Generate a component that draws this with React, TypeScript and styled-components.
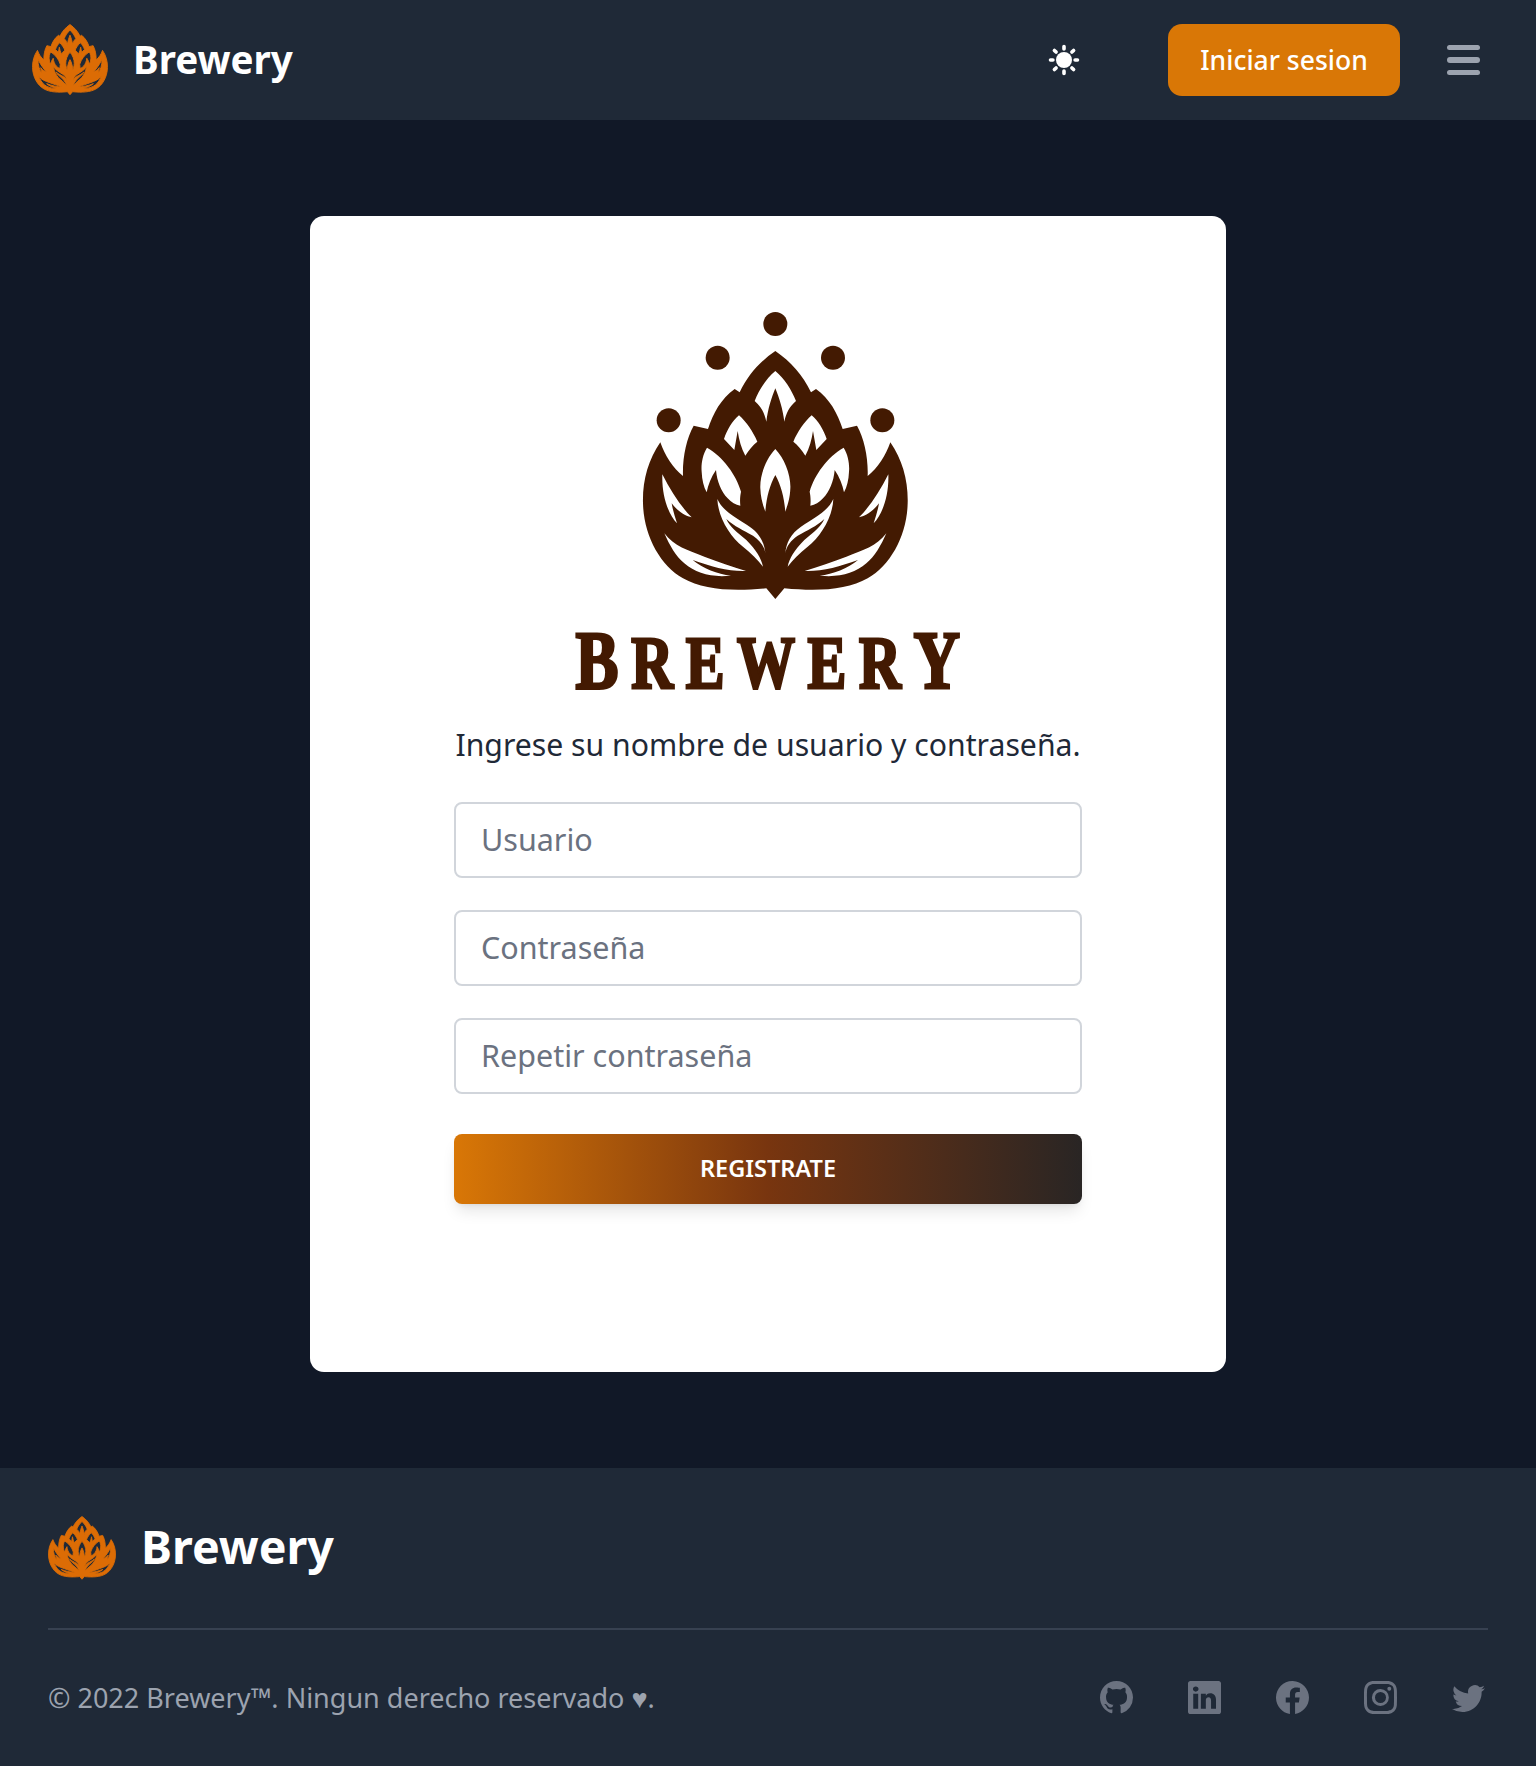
import React from "react";
import styled, { createGlobalStyle } from "styled-components";
import { BsFacebook, BsGithub, BsInstagram, BsLinkedin, BsTwitter } from "react-icons/bs";

const HOP_PATH = `
M463 168 C510 200 545 240 570 292 L585 282 C625 310 650 355 665 402 L708 392 C730 430 742 490 740 543
C770 520 795 480 808 442 C845 495 862 560 860 625 C858 720 810 810 740 850 C680 885 590 890 490 880
L463 912 L436 880 C336 890 246 885 186 850 C116 810 68 720 66 625 C64 560 81 495 118 442
C131 480 156 520 186 543 C184 490 196 430 218 392 L261 402 C276 355 301 310 341 282 L356 292 C381 240 416 200 463 168 Z
M463 228 C490 250 512 285 525 318 C505 335 495 355 490 380 C485 340 475 310 463 280 C451 310 441 340 436 380 C431 355 421 335 401 318 C414 285 436 250 463 228 Z
M572 361 C592 378 608 405 617 432 L586 465 L576 408 C572 435 565 460 553 482 C543 465 530 450 517 440 C530 410 550 380 572 361 Z
M354 361 C334 378 318 405 309 432 L340 465 L350 408 C354 435 361 460 373 482 C383 465 396 450 409 440 C396 410 376 380 354 361 Z
M463 462 C490 490 510 540 508 580 C507 610 500 630 493 650 C490 610 480 570 463 540 C446 570 436 610 433 650 C426 630 419 610 418 580 C416 540 436 490 463 462 Z
M668 458 C682 480 686 510 684 530 C683 555 678 575 669 592 C665 570 655 545 641 525 C638 560 625 590 606 610 C595 622 582 630 568 632 C570 615 568 600 566 590 C580 540 620 485 668 458 Z
M258 458 C244 480 240 510 242 530 C243 555 248 575 257 592 C261 570 271 545 285 525 C288 560 301 590 320 610 C331 622 344 630 358 632 C356 615 358 600 360 590 C346 540 306 485 258 458 Z
M637 612 C635 665 600 725 560 755 C535 775 515 795 500 815 C505 790 520 765 550 735 C580 710 600 695 610 672 C585 695 560 705 530 722 C510 735 495 755 493 775 C495 745 510 715 540 695 C580 668 620 650 637 612 Z
M289 612 C291 665 326 725 366 755 C391 775 411 795 426 815 C421 790 406 765 376 735 C346 710 326 695 316 672 C341 695 366 705 396 722 C416 735 431 755 433 775 C431 745 416 715 386 695 C346 668 306 650 289 612 Z
M124 538 C150 590 180 635 212 667 C195 662 175 655 152 625 C155 645 162 665 168 685 C140 655 122 600 124 538 Z
M802 538 C776 590 746 635 714 667 C731 662 751 655 774 625 C771 645 764 665 758 685 C786 655 804 600 802 538 Z
M130 715 C160 755 200 765 250 785 C290 800 335 815 375 828 C325 830 270 815 215 795 C245 820 290 838 330 842 C270 848 225 835 190 805 C165 785 145 750 130 715 Z
M796 715 C766 755 726 765 676 785 C636 800 591 815 551 828 C601 830 656 815 711 795 C681 820 636 838 596 842 C656 848 701 835 736 805 C761 785 781 750 796 715 Z
`;

const GlobalStyle = createGlobalStyle`
  * {
    box-sizing: border-box;
  }

  body {
    margin: 0;
    background-color: #111827;
    font-family: "Noto Sans", "Open Sans", sans-serif;
  }
`;

const Navbar = styled.nav`
  display: flex;
  align-items: center;
  height: 120px;
  padding: 0 32px;
  background-color: #1f2937;
`;

const Brand = styled.a<{ $gap: number }>`
  display: flex;
  align-items: center;
  gap: ${(p) => p.$gap}px;
  color: #fff;
`;

const BrandName = styled.span<{ $size: number; $lift: number }>`
  padding-bottom: ${(p) => p.$lift}px;
  font-size: ${(p) => p.$size}px;
  font-weight: 700;
  line-height: 1;
`;

const NavActions = styled.div`
  display: flex;
  align-items: center;
  margin-left: auto;
`;

const ThemeToggle = styled.button`
  display: flex;
  padding: 0;
  margin-right: 88px;
  border: 0;
  background: none;
  color: #fff;
`;

const LoginButton = styled.button`
  width: 232px;
  height: 72px;
  padding: 0;
  border: 0;
  border-radius: 14px;
  background-color: #d97706;
  color: #fff;
  font-family: inherit;
  font-size: 26.5px;
  font-weight: 500;
`;

const MenuButton = styled.button`
  display: flex;
  flex-direction: column;
  gap: 7px;
  width: 33px;
  padding: 0;
  margin-left: 47px;
  margin-right: 24px;
  border: 0;
  background: none;

  span {
    display: block;
    height: 5.5px;
    border-radius: 3px;
    background-color: #9ca3af;
  }
`;

const Main = styled.main`
  padding: 96px 0;
`;

const Card = styled.section`
  display: flex;
  flex-direction: column;
  align-items: center;
  width: 916px;
  height: 1156px;
  margin: 0 auto;
  padding-top: 79px;
  border-radius: 14px;
  background-color: #fff;
`;

const LogoMark = styled.svg`
  display: block;
  width: 300px;
  height: 320px;
  margin-left: 5px;
  fill: #431a02;
`;

const Wordmark = styled.div`
  margin-top: 8px;
  color: #431a02;
  font-family: "Liberation Serif", serif;
  font-size: 74px;
  font-weight: 700;
  line-height: 76px;
  letter-spacing: 16px;
  white-space: nowrap;
  -webkit-text-stroke: 3px #431a02;
  transform: scaleX(0.785);
`;

const Initial = styled.span`
  font-size: 82px;

  &:last-child {
    letter-spacing: 0;
  }
`;

const Intro = styled.p`
  margin: 24px 0 0;
  color: #1f2937;
  font-size: 30.2px;
  line-height: 40px;
  white-space: nowrap;
`;

const Form = styled.form`
  display: flex;
  flex-direction: column;
  gap: 32px;
  width: 628px;
  margin-top: 37px;
`;

const Field = styled.input`
  width: 100%;
  height: 76px;
  padding: 0 25px 3px;
  border: 2px solid #d1d5db;
  border-radius: 8px;
  background-color: #fff;
  font-family: inherit;
  font-size: 30.5px;

  &::placeholder {
    color: #6b7280;
    opacity: 1;
  }
`;

const SubmitButton = styled.button`
  height: 70px;
  margin-top: 8px;
  padding: 0 0 3px;
  border: 0;
  border-radius: 8px;
  background-image: linear-gradient(to right, #d97706, #78350f, #292524);
  box-shadow: 0 10px 15px -3px rgba(0, 0, 0, 0.1), 0 4px 6px -4px rgba(0, 0, 0, 0.1);
  color: #fff;
  font-family: inherit;
  font-size: 23.5px;
  font-weight: 600;
  text-transform: uppercase;
`;

const Footer = styled.footer`
  height: 298px;
  padding: 48px 48px 0;
  background-color: #1f2937;
`;

const Divider = styled.hr`
  height: 2px;
  margin: 48px 0 0;
  border: 0;
  background-color: #374151;
`;

const FooterBottom = styled.div`
  display: flex;
  align-items: center;
  justify-content: space-between;
  margin-top: 49px;
`;

const Copyright = styled.span`
  color: #9ca3af;
  font-size: 27px;
`;

const Socials = styled.div`
  display: flex;
  gap: 55px;
  margin-right: 3px;
  color: #6b7280;
  font-size: 33px;

  a {
    display: flex;
    color: inherit;
  }
`;

function HopIcon({ width }: { width: number }) {
  return (
    <svg viewBox="60 162 806 756" width={width} height={(width * 756) / 806} style={{ display: "block" }}>
      <path d={HOP_PATH} fill="#dc6c05" fillRule="evenodd" stroke="#dc6c05" strokeWidth={10} />
    </svg>
  );
}

function SunIcon() {
  return (
    <svg viewBox="0 0 32 32" width={32} height={32} fill="currentColor" stroke="currentColor" strokeLinecap="round">
      <circle cx="16" cy="16" r="8" stroke="none" />
      <g strokeWidth="3.6">
        <path d="M16 2.5v2.4M16 27.1v2.4M2.5 16h2.4M27.1 16h2.4" />
        <path d="M6.4 6.4l1.7 1.7M23.9 23.9l1.7 1.7M6.4 25.6l1.7-1.7M23.9 8.1l1.7-1.7" />
      </g>
    </svg>
  );
}

const BERRIES: [number, number][] = [
  [463, 87],
  [290, 188],
  [636, 188],
  [143, 376],
  [784, 376],
];

export default function App() {
  return (
    <>
      <GlobalStyle />
      <Navbar>
        <Brand $gap={25}>
          <HopIcon width={76} />
          <BrandName $size={38.6} $lift={2}>Brewery</BrandName>
        </Brand>
        <NavActions>
          <ThemeToggle aria-label="Cambiar tema">
            <SunIcon />
          </ThemeToggle>
          <LoginButton>Iniciar sesion</LoginButton>
          <MenuButton aria-label="Menu">
            <span />
            <span />
            <span />
          </MenuButton>
        </NavActions>
      </Navbar>

      <Main>
        <Card>
          <LogoMark viewBox="0 0 900 960">
            {BERRIES.map(([cx, cy]) => (
              <circle key={cx} cx={cx} cy={cy} r={36} />
            ))}
            <path d={HOP_PATH} fillRule="evenodd" />
          </LogoMark>
          <Wordmark>
            <Initial>B</Initial>REWER<Initial>Y</Initial>
          </Wordmark>
          <Intro>Ingrese su nombre de usuario y contraseña.</Intro>
          <Form>
            <Field placeholder="Usuario" />
            <Field placeholder="Contraseña" type="password" />
            <Field placeholder="Repetir contraseña" type="password" />
            <SubmitButton type="button">Registrate</SubmitButton>
          </Form>
        </Card>
      </Main>

      <Footer>
        <Brand $gap={25}>
          <HopIcon width={68} />
          <BrandName $size={46.6} $lift={4}>Brewery</BrandName>
        </Brand>
        <Divider />
        <FooterBottom>
          <Copyright>© 2022 Brewery™. Ningun derecho reservado ♥.</Copyright>
          <Socials>
            <a href="#github"><BsGithub /></a>
            <a href="#linkedin"><BsLinkedin /></a>
            <a href="#facebook"><BsFacebook /></a>
            <a href="#instagram"><BsInstagram /></a>
            <a href="#twitter"><BsTwitter /></a>
          </Socials>
        </FooterBottom>
      </Footer>
    </>
  );
}
